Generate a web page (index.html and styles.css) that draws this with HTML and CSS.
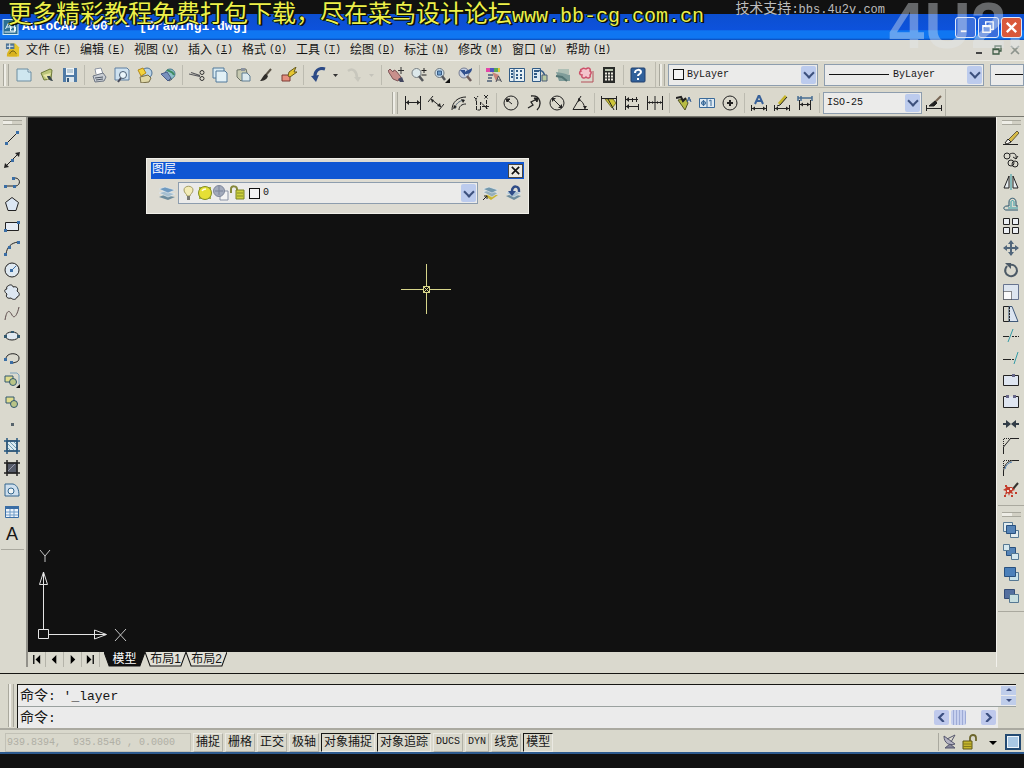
FILE: index.html
```html
<!DOCTYPE html>
<html lang="zh-CN">
<head>
<meta charset="utf-8">
<title>AutoCAD 2007 - [Drawing1.dwg]</title>
<link rel="stylesheet" href="styles.css">
</head>
<body>
<div class="screen">
  <div class="caption">
    <p class="promo">更多精彩教程免费打包下载，尽在菜鸟设计论坛<span class="mono">www.bb-cg.com.cn</span></p>
    <p class="support">技术支持<span class="mono">:bbs.4u2v.com</span></p>
  </div>
  <div class="watermark">4U2.</div>

  <header class="titlebar">
    <svg class="app" viewBox="0 0 16 16"><rect x=".5" y=".5" width="15" height="15" fill="#2c6f94" stroke="#cfeaf2"/><path d="M3 10l3-6 3 6M4 8h5M8 8h5v4H8zM2 13h11M12 3v10" fill="none" stroke="#e6f7fa"/></svg>
    <h1>AutoCAD 2007 - [Drawing1.dwg]</h1>
    <div class="winbtns">
      <button aria-label="最小化"><svg viewBox="0 0 16 16"><path d="M3 11h6v2H3z" fill="#fff"/></svg></button>
      <button aria-label="还原"><svg viewBox="0 0 16 16"><path d="M5 5V2h8v8h-3M2 6h8v7H2zM2 7h8" fill="none" stroke="#fff" stroke-width="1.5"/></svg></button>
      <button class="close" aria-label="关闭"><svg viewBox="0 0 16 16"><path d="M3 3l10 10M13 3L3 13" stroke="#fff" stroke-width="2.5"/></svg></button>
    </div>
  </header>

  <nav class="menubar">
    <svg class="doc" viewBox="0 0 16 16"><path d="M4 1h7l4 4v10H4z" fill="#e5c52d"/><path d="M1 1h9v6H1z" fill="#4d7397"/><path d="M2 4h7M5 1v6" stroke="#eef6fa"/><path d="M2 14c0-8 8-8 11-1v2H2z" fill="#d9b31f"/><path d="M5 12c2-4 5-4 7 0" fill="none" stroke="#5c5214"/></svg>
    <button>文件<span class="key">(<u>F</u>)</span></button>
    <button>编辑<span class="key">(<u>E</u>)</span></button>
    <button>视图<span class="key">(<u>V</u>)</span></button>
    <button>插入<span class="key">(<u>I</u>)</span></button>
    <button>格式<span class="key">(<u>O</u>)</span></button>
    <button>工具<span class="key">(<u>T</u>)</span></button>
    <button>绘图<span class="key">(<u>D</u>)</span></button>
    <button>标注<span class="key">(<u>N</u>)</span></button>
    <button>修改<span class="key">(<u>M</u>)</span></button>
    <button>窗口<span class="key">(<u>W</u>)</span></button>
    <button>帮助<span class="key">(<u>H</u>)</span></button>
    <div class="docbtns">
      <button aria-label="最小化文档"><svg viewBox="0 0 12 12"><path d="M3 9h6" stroke="#444" stroke-width="2"/></svg></button>
      <button aria-label="还原文档"><svg viewBox="0 0 12 12"><path d="M4 4V2h6v5H8M2 5h6v5H2zM2 5.500h6" fill="none" stroke="#3e5c46" stroke-width="1.300"/></svg></button>
      <button aria-label="关闭文档"><svg viewBox="0 0 12 12"><path d="M2 2l8 8M10 2l-8 8" stroke="#8d948d" stroke-width="1.600"/></svg></button>
    </div>
  </nav>

  <div class="toolrow">
    <div class="bar" role="toolbar" aria-label="标准">
      <i class="grip"></i>
      <button aria-label="新建"><svg viewBox="0 0 16 16"><path d="M1 2h11l3 3v9H1z" fill="#cfe6ef" stroke="#6d8da0"/><path d="M12 2v3h3" fill="#fff" stroke="#6d8da0"/></svg></button>
      <button aria-label="打开"><svg viewBox="0 0 16 16"><path d="M2 6l9-4 2 1-1 9-7 1z" fill="#bcc67a" stroke="#6e7a3a"/><path d="M4 8l8-2-3 7z" fill="#e8e6a8"/><path d="M8 9c1 4 4 5 6 5l-3-5z" fill="#37454b"/></svg></button>
      <button aria-label="保存"><svg viewBox="0 0 16 16"><path d="M1 1h14v14H1z" fill="#4f7aa6"/><path d="M4 1h8v7H4z" fill="#eef3f6"/><path d="M5 3h6M5 5h6" stroke="#85a5bc"/><path d="M4 10h8v5H4z" fill="#dce6ec"/><path d="M5 11h2v4H5z" fill="#35597c"/></svg></button>
      <i class="sep"></i>
      <button aria-label="打印"><svg viewBox="0 0 16 16"><path d="M5 7l-1-5 6-1 2 6" fill="#fff" stroke="#8b93a0"/><path d="M2 9l10-3 3 4-2 4-9 1z" fill="#c9ced4" stroke="#6f7784"/><path d="M4 11l8-1M5 13l7-1" stroke="#4f5866"/></svg></button>
      <button aria-label="打印预览"><svg viewBox="0 0 16 16"><path d="M1 1h12l2 2v10H1z" fill="#cfe2f0" stroke="#5e7fa0"/><circle cx="9" cy="8" r="3.500" fill="#eaf5fb" stroke="#4a5d73"/><path d="M7 11l-3 4" stroke="#474a5a" stroke-width="2"/></svg></button>
      <button aria-label="发布"><svg viewBox="0 0 16 16"><circle cx="10" cy="6" r="5" fill="#b9d3e6" stroke="#4d7094"/><path d="M1 3l5-2 3 5-5 3z" fill="#f2d33c" stroke="#b4891d"/><path d="M3 10l8-2 3 3-2 4-8 1z" fill="#dfd7a6" stroke="#766d48"/></svg></button>
      <button aria-label="三维"><svg viewBox="0 0 16 16"><circle cx="10" cy="7" r="5" fill="#8fc0c9" stroke="#4c7b91"/><path d="M7 3c3 2 6 1 7 5" fill="none" stroke="#3e8a5f" stroke-width="2"/><path d="M1 7l6-2 4 6-3 3z" fill="#7991bd" stroke="#4a5c88"/><path d="M9 14l3-2" stroke="#456"/></svg></button>
      <i class="sep"></i>
      <button aria-label="剪切"><svg viewBox="0 0 16 16"><path d="M0 7l11 2.500M2 5.500l9 3" stroke="#55565a" stroke-width="1.200"/><circle cx="13" cy="5.500" r="2" fill="none" stroke="#333"/><circle cx="13" cy="11.500" r="2" fill="none" stroke="#333"/></svg></button>
      <button aria-label="复制"><svg viewBox="0 0 16 16"><path d="M1 1h11v10H1z" fill="#d8eaf1" stroke="#50799a"/><path d="M4 4h9l2 2v9H4z" fill="#e2f0f5" stroke="#50799a"/></svg></button>
      <button aria-label="粘贴"><svg viewBox="0 0 16 16"><path d="M2 3l9-1 2 8-7 4-4-4z" fill="#c6c9b0" stroke="#6d7468"/><path d="M6 1h4v3H6z" fill="#8b93a0"/><path d="M7 6h5l3 3v5H7z" fill="#dbe9ee" stroke="#5f7d92"/></svg></button>
      <button aria-label="特性匹配"><svg viewBox="0 0 16 16"><path d="M13 2L7 9" stroke="#5a5347" stroke-width="2"/><path d="M8 7l2 2c-1 4-5 5-8 5 2-2 3-6 6-7z" fill="#2f2d2a"/></svg></button>
      <button aria-label="块编辑器"><svg viewBox="0 0 16 16"><path d="M1 8h8v6H1z" fill="#e58f7e" stroke="#7b3b34"/><path d="M7 9l1-4 7-5-2 5h3l-7 5z" fill="#e6c631" stroke="#665c20"/></svg></button>
      <i class="sep"></i>
      <button aria-label="放弃"><svg viewBox="0 0 16 16"><path d="M15 2C9 0 4 4 5 11" fill="none" stroke="#2c4a86" stroke-width="3"/><path d="M1 9l8-1-3 7z" fill="#2c4a86"/></svg></button>
      <button class="more" aria-label="放弃列表"><svg viewBox="0 0 8 8"><path d="M1 3h5L3.500 6z" fill="#333"/></svg></button>
      <button aria-label="重做"><svg viewBox="0 0 16 16"><path d="M2 4c5-4 9 1 9 7" fill="none" stroke="#c8c7bd" stroke-width="2.500"/><path d="M8 10h7l-3 5z" fill="#c8c7bd"/></svg></button>
      <button class="more" aria-label="重做列表"><svg viewBox="0 0 8 8"><path d="M1 3h5L3.500 6z" fill="#c4c3ba"/></svg></button>
      <i class="sep"></i>
      <button aria-label="实时平移"><svg viewBox="0 0 16 16"><path d="M0 4l2-2 3 3 1-2 2 1 5 6-3 4-5-2z" fill="#c9908c" stroke="#7e5558"/><path d="M10 12l4-2 2 5h-4z" fill="#42465f"/><path d="M13 0v7M10 3.500h6" stroke="#333"/></svg></button>
      <button aria-label="实时缩放"><svg viewBox="0 0 16 16"><circle cx="5.500" cy="6" r="4.500" fill="#dce8ea" stroke="#777e82"/><path d="M8 9l4 5" stroke="#53565a" stroke-width="2.500"/><path d="M13 1v5M10.500 3.500h5M10.500 8h5" stroke="#222"/></svg></button>
      <button aria-label="窗口缩放"><svg viewBox="0 0 16 16"><circle cx="5.500" cy="6" r="4.500" fill="#c9dff1" stroke="#6f777c"/><path d="M3.500 4h4v4h-4z" fill="#6c9bc7" stroke="#395b82"/><path d="M8 9l3 4" stroke="#53565a" stroke-width="2.500"/><path d="M16 11v5h-5z" fill="#111"/></svg></button>
      <button aria-label="缩放上一个"><svg viewBox="0 0 16 16"><circle cx="7" cy="6" r="5" fill="#c5cfe3" stroke="#777e93"/><path d="M10 9l4 5" stroke="#6f5d5c" stroke-width="2.500"/><path d="M3 3h5v2c3-3 5-2 7-4 0 5-3 6-7 6v2z" fill="#31508e"/></svg></button>
      <i class="sep"></i>
      <button aria-label="特性"><svg viewBox="0 0 16 16"><path d="M0 1h4v4H0z" fill="#e247a8"/><path d="M4 1h4v4H4z" fill="#4f52c3"/><path d="M8 1h4v4H8z" fill="#57a857"/><path d="M12 1h2v4h-2z" fill="#e2c438"/><path d="M2 8h5M2 11h4M1 14h5" stroke="#4a5c77" stroke-width="1.500"/><path d="M6 5l7 3-3 6z" fill="#c9847a"/><path d="M10 15l2.500-6 3 6M11 13h4" fill="none" stroke="#4b4c56"/></svg></button>
      <button aria-label="设计中心"><svg viewBox="0 0 16 16"><path d="M.5 1.500h15v13H.5z" fill="#e7f0f4" stroke="#315b86"/><path d="M5 1v14" stroke="#315b86"/><path d="M2 4h2M2 7h2M2 10h2M7 4h2M11 4h2M7 8h2M11 8h2M7 11h2M11 11h2" stroke="#315b86" stroke-width="2"/></svg></button>
      <button aria-label="工具选项板"><svg viewBox="0 0 16 16"><path d="M.5 1.500h8v13h-8z" fill="#dce9f2" stroke="#315b86"/><path d="M2 4h5M2 7h3M2 10h3" stroke="#315b86" stroke-width="2"/><path d="M5 4c6-2 8 3 8 7" fill="none" stroke="#315b86" stroke-width="1.500"/><path d="M10 8h5v6h-5z" fill="#b9c9a0" stroke="#4b5c77"/></svg></button>
      <button aria-label="图纸集管理器"><svg viewBox="0 0 16 16"><path d="M3 2h11v5H3z" fill="#aebfb5"/><path d="M1 5l6 1 8 2v6H4z" fill="#7f9c99"/><path d="M1 9l6 1 5 4" fill="none" stroke="#527372" stroke-width="2"/></svg></button>
      <button aria-label="标记集管理器"><svg viewBox="0 0 16 16"><path d="M3 15h12V4" fill="none" stroke="#b5505b"/><path d="M4 2c2-2 3 0 4 0 2-2 5-1 4 2 2 1 1 3 0 4 1 3-2 4-4 2-2 2-5 1-4-2-3 0-3-3-1-4-1-1 0-2 1-2z" fill="#f3c4cc" stroke="#cc4f68" stroke-width="1.500"/></svg></button>
      <button aria-label="快速计算器"><svg viewBox="0 0 16 16"><path d="M2 0h12v16H2z" fill="#292b29"/><path d="M4 2h8v2H4z" fill="#b8c4ae"/><path d="M4 6.500h8M4 9.500h8M4 12.500h8" stroke="#ece9df" stroke-width="2" stroke-dasharray="2 1"/></svg></button>
      <i class="sep"></i>
      <button aria-label="帮助"><svg viewBox="0 0 16 16"><rect x="1" y="1" width="14" height="14" rx="1" fill="#31619b" stroke="#23416d"/><path d="M5 6c0-4 6-4 6-1 0 2-3 2-3 4M8 11v2" fill="none" stroke="#fff" stroke-width="2"/></svg></button>
    </div>
    <div class="bar props" role="toolbar" aria-label="对象特性">
      <i class="grip"></i>
      <div class="combo color"><i class="swatch"></i><select aria-label="颜色"><option>ByLayer</option></select><i class="drop"></i></div>
      <div class="combo ltype"><i class="rule"></i><select aria-label="线型"><option>ByLayer</option></select><i class="drop"></i></div>
      <div class="combo lweight"><i class="rule"></i></div>
    </div>
  </div>

  <div class="toolrow second">
    <div class="bar dims" role="toolbar" aria-label="标注">
      <i class="grip"></i>
      <button aria-label="线性"><svg class="k" viewBox="0 0 16 16"><path d="M.5 1v14M15.500 1v14M1 7.500h14"/><path d="M1 7.500L4 5v5zM15 7.500L12 5v5z" fill="#222" stroke="none"/></svg></button>
      <button aria-label="对齐"><svg class="k" viewBox="0 0 16 16"><path d="M5 1L0 7M16 9l-5 6M3 4l10 8"/><path d="M3 4l1 4 2-3zM13 12l-4-1 3-3z" fill="#222" stroke="none"/></svg></button>
      <button aria-label="弧长"><svg class="k" viewBox="0 0 16 16"><path d="M1 15C1 7 7 2 15 2M8 15c0-4 3-6 7-6"/><path d="M4 14c0-5 4-8 9-9" stroke="#567"/><path d="M2 14l1-4 3 2zM14 5l-4-1 2 4z" fill="#222" stroke="none"/></svg></button>
      <button aria-label="坐标"><svg class="k" viewBox="0 0 16 16"><path d="M2.500 6v9H6M6.500 15V7l7 7M12.500 5v9M8 11.500h7M0 2l2 2 2-3M2 4v2M10 0l4 4M14 0l-4 4" stroke-dasharray="4 1"/></svg></button>
      <i class="sep"></i>
      <button aria-label="半径"><svg class="k" viewBox="0 0 16 16"><circle cx="8" cy="8" r="7"/><path d="M9 9L4 5"/><path d="M3 4h4L4 7z" fill="#222"/></svg></button>
      <button aria-label="折弯"><svg class="k" viewBox="0 0 16 16"><path d="M5 1c10-1 11 9 6 14M2 13l5-3-2-3 6-3" stroke-width="1.300"/><path d="M12 3H8l3 4z" fill="#222"/></svg></button>
      <button aria-label="直径"><svg class="k" viewBox="0 0 16 16"><circle cx="8" cy="8" r="7"/><path d="M4 4l8 8"/><path d="M3 3h4L3 7zM13 13H9l4-4z" fill="#222" stroke="none"/></svg></button>
      <button aria-label="角度"><svg class="k" viewBox="0 0 16 16"><path d="M9 1L1 14.500h15M6 5c4 0 6 4 7 9"/><path d="M6 3v4l3-2zM11 11h4l-2 3z" fill="#222" stroke="none"/></svg></button>
      <i class="sep"></i>
      <button aria-label="快速标注"><svg class="k" viewBox="0 0 16 16"><path d="M4 4h8l3 4-4 5z" fill="#cfc63b" stroke="#77722e"/><path d="M.5 1v14M15.500 1v14M1 3.500h14M7 4l6 11"/></svg></button>
      <button aria-label="基线"><svg class="k" viewBox="0 0 16 16"><path d="M1.500 1v14M8.500 3v4M14.500 9v6M2 4.500h12M2 11.500h12M12.500 2v5"/><path d="M2 4.500L5 2v5zM2 11.500L5 9v5z" fill="#222" stroke="none"/></svg></button>
      <button aria-label="连续"><svg class="k" viewBox="0 0 16 16"><path d="M.5 1v14M8 1v14M15.500 1v14M1 7.500h14"/><path d="M1 7.500L3 6v3zM7 7.500L5 6v3zM9 7.500L11 6v3zM15 7.500L13 6v3z" fill="#222" stroke="none"/></svg></button>
      <i class="sep"></i>
      <button aria-label="快速引线"><svg viewBox="0 0 16 16"><path d="M2 5l8-1 2 4-3 7z" fill="#b8bd43" stroke="#515323"/><path d="M0 3l5-1 2 4 3-3" fill="none" stroke="#222" stroke-width="2"/><path d="M11 7l2-5 2 5M12 5h3" fill="none" stroke="#345d91"/></svg></button>
      <button aria-label="公差"><svg viewBox="0 0 16 16"><path d="M.5 3.500h15v9H.5zM8 3v10" fill="#dfeaf2" stroke="#396a9a"/><circle cx="4.500" cy="8" r="2" fill="none" stroke="#396a9a"/><path d="M4.500 5v6M2 8h5M10 6l2-1v6" fill="none" stroke="#396a9a"/></svg></button>
      <button aria-label="圆心标记"><svg class="k" viewBox="0 0 16 16"><circle cx="8" cy="8" r="7"/><path d="M8 5v6M5 8h6" stroke-width="2"/></svg></button>
      <i class="sep"></i>
      <button aria-label="编辑标注"><svg class="k" viewBox="0 0 16 16"><path d="M4 9l4-9 4 9M5 6h6" stroke="#386199" stroke-width="2"/><path d="M.5 10v6M15.500 10v6M1 13.500h14"/><path d="M1 13.500l3-2v4zM15 13.500l-3-2v4z" fill="#222" stroke="none"/></svg></button>
      <button aria-label="编辑标注文字"><svg class="k" viewBox="0 0 16 16"><path d="M12 1L5 9" stroke="#c5b42f" stroke-width="3"/><path d="M13 2L6 10l-3 1M.5 10v6M15.500 10v6M1 13.500h14"/><path d="M1 13.500l3-2v4zM15 13.500l-3-2v4z" fill="#222" stroke="none"/></svg></button>
      <button aria-label="标注更新"><svg class="k" viewBox="0 0 16 16"><path d="M1 1v5M15 1v5M1 3h14M4 1v5" stroke="#486d93" stroke-width="1.500"/><path d="M2.500 5v10M13.500 5v10M3 9.500h10"/><path d="M3 9.500l3-2v4zM13 9.500l-3-2v4z" fill="#222" stroke="none"/></svg></button>
      <i class="sep"></i>
      <div class="combo dimstyle"><select aria-label="标注样式"><option>ISO-25</option></select><i class="drop"></i></div>
      <button aria-label="标注样式管理器"><svg class="k" viewBox="0 0 16 16"><path d="M15 1L9 7" stroke="#765" stroke-width="2"/><path d="M9 6l2 2-3 3H3z" fill="#222"/><path d="M.5 10v6M15.500 10v6M1 13.500h14"/></svg></button>
    </div>
  </div>

  <main class="work">
    <aside class="side left" role="toolbar" aria-label="绘图">
      <i class="grip h"></i>
      <button aria-label="直线"><svg class="k" viewBox="0 0 16 16"><path d="M2 14L14 2"/><path d="M12 1h3v3h-3zM1 12h3v3H1z" fill="#3a6ea5" stroke="none"/></svg></button>
      <button aria-label="构造线"><svg class="k" viewBox="0 0 16 16"><path d="M1 15L15 1"/><path d="M16 0l-1 5-4-4zM0 16l1-5 4 4z" fill="#222" stroke="none"/><path d="M7 7h3v3H7z" fill="#3a6ea5" stroke="none"/></svg></button>
      <button aria-label="多段线"><svg class="k" viewBox="0 0 16 16"><path d="M2 12h9M9 4c8-1 8 7 3 8"/><path d="M0 11h3v3H0zM9 11h3v3H9zM8 3h3v3H8z" fill="#3a6ea5" stroke="none"/></svg></button>
      <button aria-label="正多边形"><svg class="k" viewBox="0 0 16 16"><path d="M8 1.500l6.500 5-2.500 8H4l-2.500-8z" fill="#dce7f3"/></svg></button>
      <button aria-label="矩形"><svg class="k" viewBox="0 0 16 16"><path d="M1.500 4.500h13v8h-13z" fill="#e6ecf4"/><path d="M13 3h3v3h-3zM0 11h3v3H0z" fill="#3a6ea5" stroke="none"/></svg></button>
      <button aria-label="圆弧"><svg class="k" viewBox="0 0 16 16"><path d="M2 14C3 7 7 3 14 2"/><path d="M13 1h3v3h-3zM0 13h3v3H0zM4 6h3v3H4z" fill="#3a6ea5" stroke="none"/></svg></button>
      <button aria-label="圆"><svg class="k" viewBox="0 0 16 16"><circle cx="8" cy="8" r="7" fill="#dfe9f1"/><path d="M8 8l4-4" stroke="#3a6ea5"/><path d="M6 7h3v3H6z" fill="#3a6ea5" stroke="none"/></svg></button>
      <button aria-label="修订云线"><svg class="k" viewBox="0 0 16 16"><path d="M4 2c2-2 5-1 5 1 3-1 6 1 4 4 3 2 3 5 0 6-1 3-4 3-6 1-3 1-6-1-4-4-3-2-3-5 0-5-1-1 0-3 1-3z" fill="#dde7f1"/></svg></button>
      <button aria-label="样条曲线"><svg class="k" viewBox="0 0 16 16"><path d="M1 14C3 2 6 5 8 9s5 1 7-8" stroke="#5c4b4b"/></svg></button>
      <button aria-label="椭圆"><svg class="k" viewBox="0 0 16 16"><ellipse cx="8" cy="8" rx="6.500" ry="4" fill="#dfe9f1"/><path d="M0 7h3v3H0zM13 7h3v3h-3zM7 3h3v2H7z" fill="#31586e" stroke="none"/></svg></button>
      <button aria-label="椭圆弧"><svg class="k" viewBox="0 0 16 16"><path d="M2 10c-1-8 13-8 13-2 0 4-3 4-6 5"/><path d="M0 8h3v3H0zM6 11h3v3H6z" fill="#3a6ea5" stroke="none"/></svg></button>
      <button aria-label="插入块"><svg class="k" viewBox="0 0 16 16"><path d="M6 1h7l2 2v9" stroke="#7ca3bc"/><path d="M1 4h8v6H1z" fill="#e0dc8c" stroke="#31586e"/><circle cx="9" cy="10" r="3.500" fill="#b9c487" stroke="#31586e"/><path d="M16 12v4h-4z" fill="#111" stroke="none"/></svg></button>
      <button aria-label="创建块"><svg class="k" viewBox="0 0 16 16"><path d="M2 3h8v6H2z" fill="#e0dc8c" stroke="#31586e"/><circle cx="10" cy="10" r="3.500" fill="#b9c487" stroke="#31586e"/></svg></button>
      <button aria-label="点"><svg viewBox="0 0 16 16"><path d="M7 7h3v3H7z" fill="#56636c"/></svg></button>
      <button aria-label="图案填充"><svg class="k" viewBox="0 0 16 16"><path d="M3 3h10v10H3z" fill="#dcebf0"/><path d="M3 5l8 8M3 9l4 4M5 3l8 8M9 3l4 4" stroke="#73a0b4"/><path d="M0 3h16M0 13h16M3 0v16M13 0v16" stroke="#25557d" stroke-width="1.500"/></svg></button>
      <button aria-label="渐变色"><svg class="k" viewBox="0 0 16 16"><path d="M3 3h10v10H3z" fill="#555b68"/><path d="M0 3h16M0 13h16M3 0v16M13 0v16" stroke-width="1.500"/><path d="M4 11l7-7" stroke="#99a"/></svg></button>
      <button aria-label="面域"><svg class="k" viewBox="0 0 16 16"><path d="M1 2h8c4 1 6 5 6 12H1z" fill="#cfe0ee" stroke="#32658d"/><circle cx="7" cy="9" r="3" fill="#f0f4f4" stroke="#32658d"/></svg></button>
      <button aria-label="表格"><svg class="k" viewBox="0 0 16 16"><path d="M1.500 2.500h13v11h-13z" fill="#eef4fa" stroke="#3a6ea5"/><path d="M1 2h14v3H1z" fill="#3a6ea5" stroke="none"/><path d="M2 8h12M2 11h12M6 5v8M10 5v8" stroke="#6f9bc7"/></svg></button>
      <button aria-label="多行文字"><span class="letter">A</span></button>
      <i class="cut"></i>
    </aside>

    <section class="center">
      <div class="canvas">
        <div class="palette">
          <div class="ptitle"><h2>图层</h2><button aria-label="关闭图层"><svg viewBox="0 0 12 12"><path d="M2 2l8 8M10 2l-8 8" stroke="#111" stroke-width="1.800"/></svg></button></div>
          <div class="pbody">
            <button aria-label="图层特性管理器"><svg viewBox="0 0 16 16"><path d="M0 12l5-2 11 2-7 3z" fill="#6d8c9d"/><path d="M0 8l6-2 10 3-7 3z" fill="#a6bfd0" stroke="#e9eef0" stroke-width=".6"/><path d="M0 4l6-2 10 3-7 3z" fill="#6f9ac0" stroke="#e9eef0" stroke-width=".6"/></svg></button>
            <div class="combo layers">
              <svg viewBox="0 0 16 16"><path d="M6 11c0-2-3-3-3-6 0-5 9-5 9 0 0 3-3 4-3 6z" fill="#f3ecb7" stroke="#a39c63"/><path d="M6 11h3v4H6z" fill="#7a7a74"/></svg>
              <svg viewBox="0 0 16 16"><path d="M2 2h12v12H2z" fill="#a5ad45"/><circle cx="8" cy="8" r="6.500" fill="#e5df35" stroke="#7f8b24"/><path d="M5 6c1-2 2-2 4-2" fill="none" stroke="#fffde0" stroke-width="1.500"/></svg>
              <svg viewBox="0 0 16 16"><path d="M7 6h8v9H7z" fill="#f4f4f4" stroke="#8b93a5"/><circle cx="6" cy="6" r="5.500" fill="#a2aabb" stroke="#7e879b"/><path d="M2 6h8M6 1v9" stroke="#7b8499"/></svg>
              <svg viewBox="0 0 16 16"><path d="M2 8V4c0-4 6-3 6 0v3" fill="none" stroke="#85883c" stroke-width="2"/><path d="M7 5h8v9H7z" fill="#ccd03a" stroke="#7d8425"/><path d="M8 8h6M8 11h6" stroke="#868d29"/></svg>
              <i class="swatch"></i>
              <select aria-label="图层"><option>0</option></select><i class="drop"></i>
            </div>
            <button aria-label="将对象的图层置为当前"><svg viewBox="0 0 16 16"><path d="M3 11l3-2 10 1-7 5z" fill="#c8b42f"/><path d="M1 7l6-2 9 3-6 4z" fill="#95aeb9" stroke="#e9eef0" stroke-width=".6"/><path d="M1 4l6-2 9 3-6 3z" fill="#7398ac" stroke="#e9eef0" stroke-width=".6"/><path d="M1 15l4-4M2 11h3v3" fill="none" stroke="#222"/></svg></button>
            <button aria-label="上一个图层"><svg viewBox="0 0 16 16"><path d="M1 11l6-2 9 2-7 4z" fill="#6d8c9d"/><path d="M1 8l6-3 9 3-7 4z" fill="#a6bfd0" stroke="#e9eef0" stroke-width=".6"/><path d="M14 7c1-7-7-7-7-1" fill="none" stroke="#2f4c87" stroke-width="2.500"/><path d="M3 6h8l-4 5z" fill="#2f4c87"/></svg></button>
          </div>
        </div>
        <svg class="cursor" viewBox="0 0 50 50"><path d="M25.500 0v22M25.500 28v22M0 25.500h22M28 25.500h22" stroke="#d7d58a"/><path d="M22.500 22.500h6v6h-6zM22 22l7 7M29 22l-7 7" fill="none" stroke="#d7d58a"/></svg>
        <svg class="ucs" viewBox="0 0 92 96"><path d="M2.500 81.500h10v9h-10zM7.500 81V24M13 86.500h57M3.500 36.500L7.500 24l4 12.500zM58.500 82l12 4.500-12 4.500zM58 86.500h9M7.500 27v9" fill="none" stroke="#e4e4e4"/><path d="M4 2l5 6 5-6M9 8v6M79 81l11 12M90 81L79 93" fill="none" stroke="#c4c4c4"/></svg>
      </div>
      <div class="tabs">
        <button class="nav" aria-label="第一个"><svg viewBox="0 0 12 12"><path d="M3 1v10" stroke="#111" stroke-width="1.500"/><path d="M10 1v10L5 6z"/></svg></button>
        <button class="nav" aria-label="上一个"><svg viewBox="0 0 12 12"><path d="M8 1v10L3 6z"/></svg></button>
        <button class="nav" aria-label="下一个"><svg viewBox="0 0 12 12"><path d="M4 1v10l5-5z"/></svg></button>
        <button class="nav" aria-label="最后一个"><svg viewBox="0 0 12 12"><path d="M9 1v10" stroke="#111" stroke-width="1.500"/><path d="M2 1v10l5-5z"/></svg></button>
        <button class="tab active"><svg viewBox="0 0 40 15" preserveAspectRatio="none"><path d="M0 0l5 14h30l5-14z" fill="#111" stroke="#111"/></svg><span>模型</span></button>
        <button class="tab"><svg viewBox="0 0 40 15" preserveAspectRatio="none"><path d="M0 0l5 14h30l5-14" fill="#e2e1d8" stroke="#111"/></svg><span>布局1</span></button>
        <button class="tab"><svg viewBox="0 0 40 15" preserveAspectRatio="none"><path d="M0 0l5 14h30l5-14" fill="#e2e1d8" stroke="#111"/></svg><span>布局2</span></button>
      </div>
    </section>

    <aside class="side right" role="toolbar" aria-label="修改">
      <i class="grip h"></i>
      <button aria-label="删除"><svg class="k" viewBox="0 0 16 16"><path d="M0 14.500h15"/><path d="M14 1l2 2-8 9-3-2z" fill="#d8bb45" stroke="#655b3d"/><path d="M5 9l3 3-4 2-2-1z" fill="#f5f3ef"/></svg></button>
      <button aria-label="复制对象"><svg class="k" viewBox="0 0 16 16"><circle cx="4" cy="4" r="3"/><circle cx="8" cy="11" r="3"/><circle cx="12" cy="12" r="3"/><path d="M7 2c4-2 7 0 6 5M10 5l3 2 2-3"/></svg></button>
      <button aria-label="镜像"><svg class="k" viewBox="0 0 16 16"><path d="M6 2v12H1zM10 2v12h5z" fill="#e7edf0"/><path d="M8 0v16" stroke="#339aa4"/></svg></button>
      <button aria-label="偏移"><svg class="k" viewBox="0 0 16 16"><path d="M15 14H3c-3 0-3-4 1-4h2V6c0-5 7-5 7 0v4h2" stroke="#27536b"/><path d="M15 12H5M8 11V6c0-2 3-2 3 0v4" stroke="#329ba5"/></svg></button>
      <button aria-label="阵列"><svg class="k" viewBox="0 0 16 16"><path d="M.5.500h6v6h-6zM9.500.500h6v6h-6zM.5 9.500h6v6h-6zM9.500 9.500h6v6h-6z" fill="#eceff3"/></svg></button>
      <button aria-label="移动"><svg viewBox="0 0 16 16"><path d="M8 1v14M1 8h14" stroke="#51667b" stroke-width="2"/><path d="M8 0l3 4H5zM8 16l3-4H5zM0 8l4-3v6zM16 8l-4-3v6z" fill="#51667b"/></svg></button>
      <button aria-label="旋转"><svg viewBox="0 0 16 16"><path d="M4 4c-7 9 8 15 10 5 0-4-3-7-7-6" fill="none" stroke="#4c5a66" stroke-width="2"/><path d="M2 1h6v6z" fill="#4c5a66"/></svg></button>
      <button aria-label="缩放"><svg class="k" viewBox="0 0 16 16"><path d="M.5.500h15v15H.5z" fill="#dde5ef" stroke="#66738e"/><path d="M.5 7.500h8v8h-8z" fill="#fafafa" stroke-dasharray="1 1"/></svg></button>
      <button aria-label="拉伸"><svg class="k" viewBox="0 0 16 16"><path d="M6 .5H.5v15H6"/><path d="M6 .5v15h9L9 .5z" fill="#dce5f1" stroke="#3f5878"/><path d="M6.500 1v14" stroke-dasharray="2 1"/></svg></button>
      <button aria-label="修剪"><svg class="k" viewBox="0 0 16 16"><path d="M0 8.500h6"/><path d="M9 8.500h7" stroke-dasharray="2 1"/><path d="M5 14L10 1" stroke="#329ba5"/></svg></button>
      <button aria-label="延伸"><svg class="k" viewBox="0 0 16 16"><path d="M0 9.500h6"/><path d="M6 9.500h6" stroke-dasharray="2 1"/><path d="M11 14l4-12" stroke="#329ba5"/></svg></button>
      <button aria-label="打断于点"><svg class="k" viewBox="0 0 16 16"><path d="M.5 3.500h15v10H.5z" fill="#dfe6f1"/><path d="M9 2h3v3H9z" fill="#668" stroke="none"/></svg></button>
      <button aria-label="打断"><svg class="k" viewBox="0 0 16 16"><path d="M4 2.500H.5v11h15v-11H12" fill="#dfe6f1"/><path d="M3 1h3v3H3zM10 1h3v3h-3z" fill="#668" stroke="none"/></svg></button>
      <button aria-label="合并"><svg viewBox="0 0 16 16"><path d="M0 8h6M10 8h6" stroke="#313c46" stroke-width="2"/><path d="M8 8L3 4v8zM8 8l5-4v8z" fill="#313c46"/></svg></button>
      <button aria-label="倒角"><svg class="k" viewBox="0 0 16 16"><path d="M.5 16V9l7-8.500H16"/><path d="M.5 8V.5H8" stroke-dasharray="1 1"/></svg></button>
      <button aria-label="圆角"><svg class="k" viewBox="0 0 16 16"><path d="M.5 16v-5C1 5 5 .5 10 .5h6"/><path d="M.5 8V.5H8" stroke-dasharray="1 1"/><path d="M2 9c1-4 3-6 7-7" stroke="#4e81b5"/></svg></button>
      <button aria-label="分解"><svg viewBox="0 0 16 16"><path d="M15 1l-5 6" stroke="#35332f" stroke-width="2"/><path d="M9 5l3 3-3 1 1 3-3-1-1 3-1-3-3 2 1-4-3-1 3-2-1-3 3 2z" fill="#c33c2b"/><path d="M4 8h2v2H4zM7 6h2v2H7z" fill="#f3d9d2"/><path d="M2 3h2v2H2zM8 13h2v2H8zM1 13h2v2H1zM12 10h2v2h-2z" fill="#c33c2b"/></svg></button>
      <i class="cut"></i>
      <i class="grip h"></i>
      <button aria-label="前置"><svg viewBox="0 0 16 16"><path d="M.5.500h9v9h-9zM7.500 8.500h8v7h-8z" fill="#e2ecef" stroke="#567893"/><path d="M3.500 3.500h9v8h-9z" fill="#5684b7" stroke="#29517f"/></svg></button>
      <button aria-label="后置"><svg viewBox="0 0 16 16"><path d="M3.500 3.500h9v8h-9z" fill="#5684b7" stroke="#29517f"/><path d="M.5.500h6v6h-6zM8.500 9.500h7v6h-7z" fill="#d6e8ef" stroke="#567893"/></svg></button>
      <button aria-label="置于对象之上"><svg viewBox="0 0 16 16"><path d="M6.500 6.500h9v8h-9z" fill="#c8e2ea" stroke="#567893"/><path d="M1.500 1.500h11v9h-11z" fill="#4b80ba" stroke="#29517f"/></svg></button>
      <button aria-label="置于对象之下"><svg viewBox="0 0 16 16"><path d="M1.500 1.500h10v9h-10z" fill="#55709f" stroke="#354d77"/><path d="M6.500 6.500h9v8h-9z" fill="#c8dfdf" stroke="#567893"/></svg></button>
      <i class="cut"></i>
    </aside>
  </main>

  <section class="command">
    <i class="grip"></i>
    <div class="console">
      <div class="line"><p class="cmd">命令<span class="mono">: '_layer</span></p>
        <div class="vscroll"><button aria-label="向上滚动"><svg viewBox="0 0 8 8"><path d="M1 5l3-3 3 3z" fill="#3c4f80"/></svg></button><button aria-label="向下滚动"><svg viewBox="0 0 8 8"><path d="M1 3l3 3 3-3z" fill="#3c4f80"/></svg></button></div>
      </div>
      <div class="line input"><label class="cmd" for="cmd">命令<span class="mono">:</span></label><input id="cmd" class="mono" type="text">
        <div class="hscroll"><button aria-label="向左滚动"><svg viewBox="0 0 8 8"><path d="M6 0L2 4l4 4" fill="none" stroke="#3c4f80" stroke-width="2"/></svg></button><i class="thumb"></i><button class="end" aria-label="向右滚动"><svg viewBox="0 0 8 8"><path d="M2 0l4 4-4 4" fill="none" stroke="#3c4f80" stroke-width="2"/></svg></button></div>
      </div>
    </div>
  </section>

  <footer class="status">
    <output class="coords">939.8394,  935.8546 , 0.0000</output>
    <button>捕捉</button><button>栅格</button><button>正交</button><button>极轴</button><button class="on">对象捕捉</button><button class="on">对象追踪</button><button class="latin">DUCS</button><button class="latin">DYN</button><button>线宽</button><button class="on">模型</button>
    <div class="tray">
      <svg viewBox="0 0 16 16"><path d="M2 2c0 7 5 10 11 8z" fill="#b4b3c2" stroke="#55566d"/><path d="M5 5l8-4M9 8l4-7M8 10l-5 4h10z" fill="#84859a" stroke="#55566d"/></svg>
      <svg viewBox="0 0 16 16"><path d="M8 8V4c0-4 6-4 6 0v3" fill="none" stroke="#6d672e" stroke-width="1.800"/><path d="M1 7h9v8H1z" fill="#c6b62c" stroke="#5f5817"/><path d="M1 10h9M1 12.500h9" stroke="#857a1c"/></svg>
    </div>
    <button class="traymenu" aria-label="状态栏菜单"><svg viewBox="0 0 8 8"><path d="M0 3h8L4 7z"/></svg></button>
    <button class="clean" aria-label="全屏显示"></button>
  </footer>
  <div class="bottom"></div>
</div>
</body>
</html>
```
FILE: styles.css
```css
* { box-sizing: border-box; }

body {
  margin: 0;
  background: #111;
  color: #161616;
  font: 12px/16px "Liberation Sans", "Noto Sans CJK SC", sans-serif;
}

p, h1, h2 { margin: 0; font-weight: normal; }
svg { display: block; }

button, select, input {
  margin: 0;
  padding: 0;
  border: 0;
  background: none;
  color: inherit;
  font: inherit;
  line-height: inherit;
}

button {
  display: flex;
  flex: none;
  align-items: center;
  justify-content: center;
}

.mono { font-family: "Liberation Mono", monospace; }

.screen {
  position: relative;
  display: flex;
  flex-direction: column;
  min-height: 100vh;
  padding-top: 14px;
}

/* Text laid over the window */
.caption {
  position: absolute;
  inset: 0 0 auto;
  z-index: 3;
  pointer-events: none;
}

.promo {
  position: absolute;
  left: 8px;
  top: 0;
  color: #eef04a;
  font-size: 24px;
  line-height: 28px;
  white-space: nowrap;
  text-shadow: 1px 1px #0c1408, -1px 0 #0c1408, 0 -1px #0c1408, 2px 1px #0c1408;
}
.promo .mono { font-size: 20px; }

.support {
  position: absolute;
  right: 139px;
  top: 0;
  color: #bdbdbd;
  font-size: 14px;
  line-height: 17px;
  white-space: nowrap;
}
.support .mono { font-size: 12px; }

.watermark {
  position: absolute;
  top: 0;
  right: 0;
  z-index: 2;
  color: rgba(228, 232, 238, .4);
  font: bold 64px/52px "Liberation Sans", sans-serif;
  pointer-events: none;
}

/* Title and menus */
.titlebar {
  display: flex;
  align-items: center;
  height: 26px;
  padding: 0 2px;
  background: linear-gradient(#0c4fd0, #0d52dc 60%, #0f76f2 65%, #0f76f2 92%, #0b49b8);
}
.app { width: 17px; height: 16px; }
.titlebar h1 {
  flex: 1;
  padding-left: 3px;
  color: #fff;
  font: bold 13px/20px "Liberation Mono", monospace;
}
.winbtns { display: flex; gap: 2px; }
.winbtns button {
  width: 21px;
  height: 21px;
  border: 1px solid #dfe8fa;
  border-radius: 3px;
  background: #3a6edc;
}
.winbtns .close { background: #d9583a; }
.winbtns svg { width: 15px; height: 15px; }

.menubar {
  display: flex;
  align-items: center;
  height: 20px;
  padding-left: 5px;
  background: #dcdad1;
}
.doc { width: 15px; height: 16px; margin-right: 6px; }
.menubar > button { width: 54px; justify-content: flex-start; }
.key {
  padding-left: 3px;
  font: 10px/16px "Liberation Mono", monospace;
}
.docbtns { display: flex; gap: 6px; margin-left: auto; padding-right: 3px; }
.docbtns svg { width: 12px; height: 12px; }

/* Toolbars */
.toolrow {
  display: flex;
  height: 28px;
  padding-top: 1px;
  overflow: hidden;
  border-top: 1px solid #edece5;
  border-bottom: 1px solid #b8b7ac;
  background: #dad8cc;
}
.toolrow.second {
  height: 29px;
  padding-left: 389px;
  border-top: 0;
  border-bottom-color: #77776f;
}
.bar { display: flex; flex: none; align-items: center; }
.bar button { width: 23px; height: 24px; }
.bar button.more { width: 13px; }
.bar button svg { width: 16px; height: 16px; }
.bar button.more svg { width: 8px; height: 8px; }
.k { fill: none; stroke: #222; }

.grip {
  flex: none;
  width: 6px;
  height: 22px;
  margin: 0 3px;
  border: solid #a9a89d;
  border-width: 0 1px;
  background: linear-gradient(90deg, #eeede6 50%, #d2d0c4 50%);
}
.grip.h {
  width: 19px;
  height: 5px;
  margin: 3px auto 2px;
  border-width: 1px 0;
}
.sep {
  flex: none;
  width: 1px;
  height: 20px;
  margin: 0 2px 0 3px;
  background: #bcbbb0;
}

.props { flex: 1; min-width: 0; margin-left: 6px; border-left: 1px solid #bbb9ae; }
.combo {
  display: flex;
  flex: none;
  align-items: center;
  height: 22px;
  border: 1px solid #8d9dae;
  background: #ebebea;
}
.combo select {
  flex: 1;
  min-width: 0;
  height: 18px;
  appearance: none;
  font: 10px/18px "Liberation Mono", monospace;
}
.drop {
  display: flex;
  flex: none;
  align-items: center;
  justify-content: center;
  width: 15px;
  height: 18px;
  margin-right: 1px;
  border-radius: 2px;
  background: #bccbed;
}
.drop::before {
  content: "";
  width: 6px;
  height: 6px;
  margin-top: -3px;
  border: solid #3c507c;
  border-width: 0 2px 2px 0;
  transform: rotate(45deg);
}
.swatch {
  flex: none;
  width: 11px;
  height: 11px;
  margin-right: 3px;
  border: 1px solid #111;
  background: #f4f4f4;
}
.rule { flex: none; width: 60px; height: 1px; margin: 0 4px; background: #111; }
.color { width: 150px; margin-right: 6px; padding-left: 4px; }
.ltype { width: 160px; margin-right: 6px; }
.lweight { flex: 1; overflow: hidden; }
.dimstyle { width: 99px; margin-left: 1px; padding-left: 3px; }
.dims { border-right: 1px solid #b3b2a7; }

/* Work area */
.work {
  display: grid;
  flex: 1;
  grid-template-columns: 28px minmax(0, 1fr) 28px;
  padding-bottom: 6px;
  background: #dad9ce;
}
.left { padding: 0 2px 0 1px; border-right: 2px solid #92918a; }
.right { padding-left: 1px; border-left: 1px solid #f2f1ec; }
.side button { width: 22px; height: 22px; }
.right button { width: 26px; }
.side svg { width: 16px; height: 16px; }
.letter { font: 18px/22px "Liberation Sans", sans-serif; }
.cut { display: block; height: 1px; margin: 4px 0 6px; background: #aaa99f; }
.side .grip { display: block; }

.center { display: flex; flex-direction: column; }
.canvas {
  position: relative;
  flex: 1;
  overflow: hidden;
  border-top: 1px solid #3b3b38;
  background: #111;
}
.palette {
  position: absolute;
  left: 118px;
  top: 40px;
  width: 383px;
  padding: 3px 4px 9px;
  border: 1px solid #f1f0ea;
  background: #dddbd2;
}
.ptitle {
  display: flex;
  align-items: center;
  height: 17px;
  padding: 0 1px;
  background: #0f56d3;
}
.ptitle h2 {
  flex: 1;
  padding-bottom: 4px;
  color: #fff;
  font-size: 12px;
  line-height: 12px;
}
.ptitle button { width: 15px; height: 14px; border: 1px solid #444; background: #eceae2; }
.ptitle svg { width: 11px; height: 11px; }
.pbody { display: flex; align-items: center; margin-top: 3px; padding-left: 4px; }
.pbody > button { width: 23px; height: 22px; }
.pbody > button svg { width: 16px; height: 16px; }
.layers { flex: 1; padding-left: 2px; }
.layers svg { flex: none; width: 16px; height: 16px; }
.layers .swatch { margin-left: 4px; }
.cursor { position: absolute; left: 373px; top: 146px; width: 50px; height: 50px; }
.ucs { position: absolute; left: 8px; bottom: 8px; width: 92px; height: 96px; }

.tabs { display: flex; height: 15px; }
.nav { width: 18px; border-right: 1px solid #b5b4aa; }
.nav svg { width: 11px; height: 11px; }
.tab { position: relative; width: 41px; height: 15px; line-height: 13px; }
.nav + .tab { margin-left: 4px; }
.tab svg { position: absolute; inset: 0; width: 100%; height: 100%; }
.tab span { position: relative; }
.tab.active { color: #fff; }

/* Command window */
.command {
  display: flex;
  height: 57px;
  padding: 10px 8px 0 6px;
  border-top: 1px solid #161613;
  border-bottom: 2px solid #aaa9a0;
  background: #d9d8cc;
}
.command .grip { height: 43px; margin: 0 3px 0 2px; }
.console { flex: 1; border: solid #161613; border-width: 1px 0 0 1px; }
.line {
  display: flex;
  align-items: center;
  height: 22px;
  padding-left: 2px;
  background: #ebebeb;
  border-bottom: 1px solid #9aa19f;
}
.line.input { height: 21px; margin-right: 18px; border: 0; }
.cmd { font-size: 14px; line-height: 18px; }
.cmd .mono { font-size: 13px; white-space: pre; }
.line input { flex: 1; min-width: 0; height: 18px; font-size: 13px; }
.vscroll { margin-left: auto; }
.vscroll button {
  width: 15px;
  height: 10px;
  border-bottom: 1px solid #ebebeb;
  background: #bfcdea;
}
.vscroll svg { width: 8px; height: 8px; }
.hscroll { display: flex; width: 66px; padding: 0 2px; }
.hscroll button, .thumb { width: 15px; height: 15px; background: #bfc9ec; border-radius: 2px; }
.hscroll svg { width: 9px; height: 9px; }
.thumb { margin-left: 2px; background: repeating-linear-gradient(90deg, #c7d0ee 0 2px, #9eabd6 2px 3px); }
.hscroll .end { margin-left: auto; }

/* Status bar */
.status {
  display: flex;
  align-items: center;
  gap: 2px;
  height: 24px;
  padding: 2px 3px 0 5px;
  border-bottom: 2px solid #2d5a8e;
  background: #d9d8cc;
}
.coords {
  width: 186px;
  padding-left: 1px;
  border: 1px solid #c2c1b6;
  color: #b0afa5;
  font: 10px/17px "Liberation Mono", monospace;
  white-space: pre;
}
.status button {
  height: 19px;
  padding: 0 2px;
  border: 1px solid;
  border-color: #eae9e2 #b2b1a7 #b2b1a7 #eae9e2;
}
.status .on { border-color: #161613 #eae9e2 #eae9e2 #161613; }
.status .latin { font: 10px/16px "Liberation Mono", monospace; }
.tray {
  display: flex;
  gap: 4px;
  margin-left: auto;
  padding: 1px 3px;
  border-left: 1px solid #aaa99f;
}
.tray svg { width: 16px; height: 16px; }
.status .traymenu { width: 20px; border: 0; }
.traymenu svg { width: 8px; height: 8px; }
.status .clean {
  width: 16px;
  height: 16px;
  border: 2px solid #234a72;
  background: #a9c8e4;
  box-shadow: inset 0 0 0 1px #eef5fa;
}
.bottom { height: 14px; background: #111; }
```
